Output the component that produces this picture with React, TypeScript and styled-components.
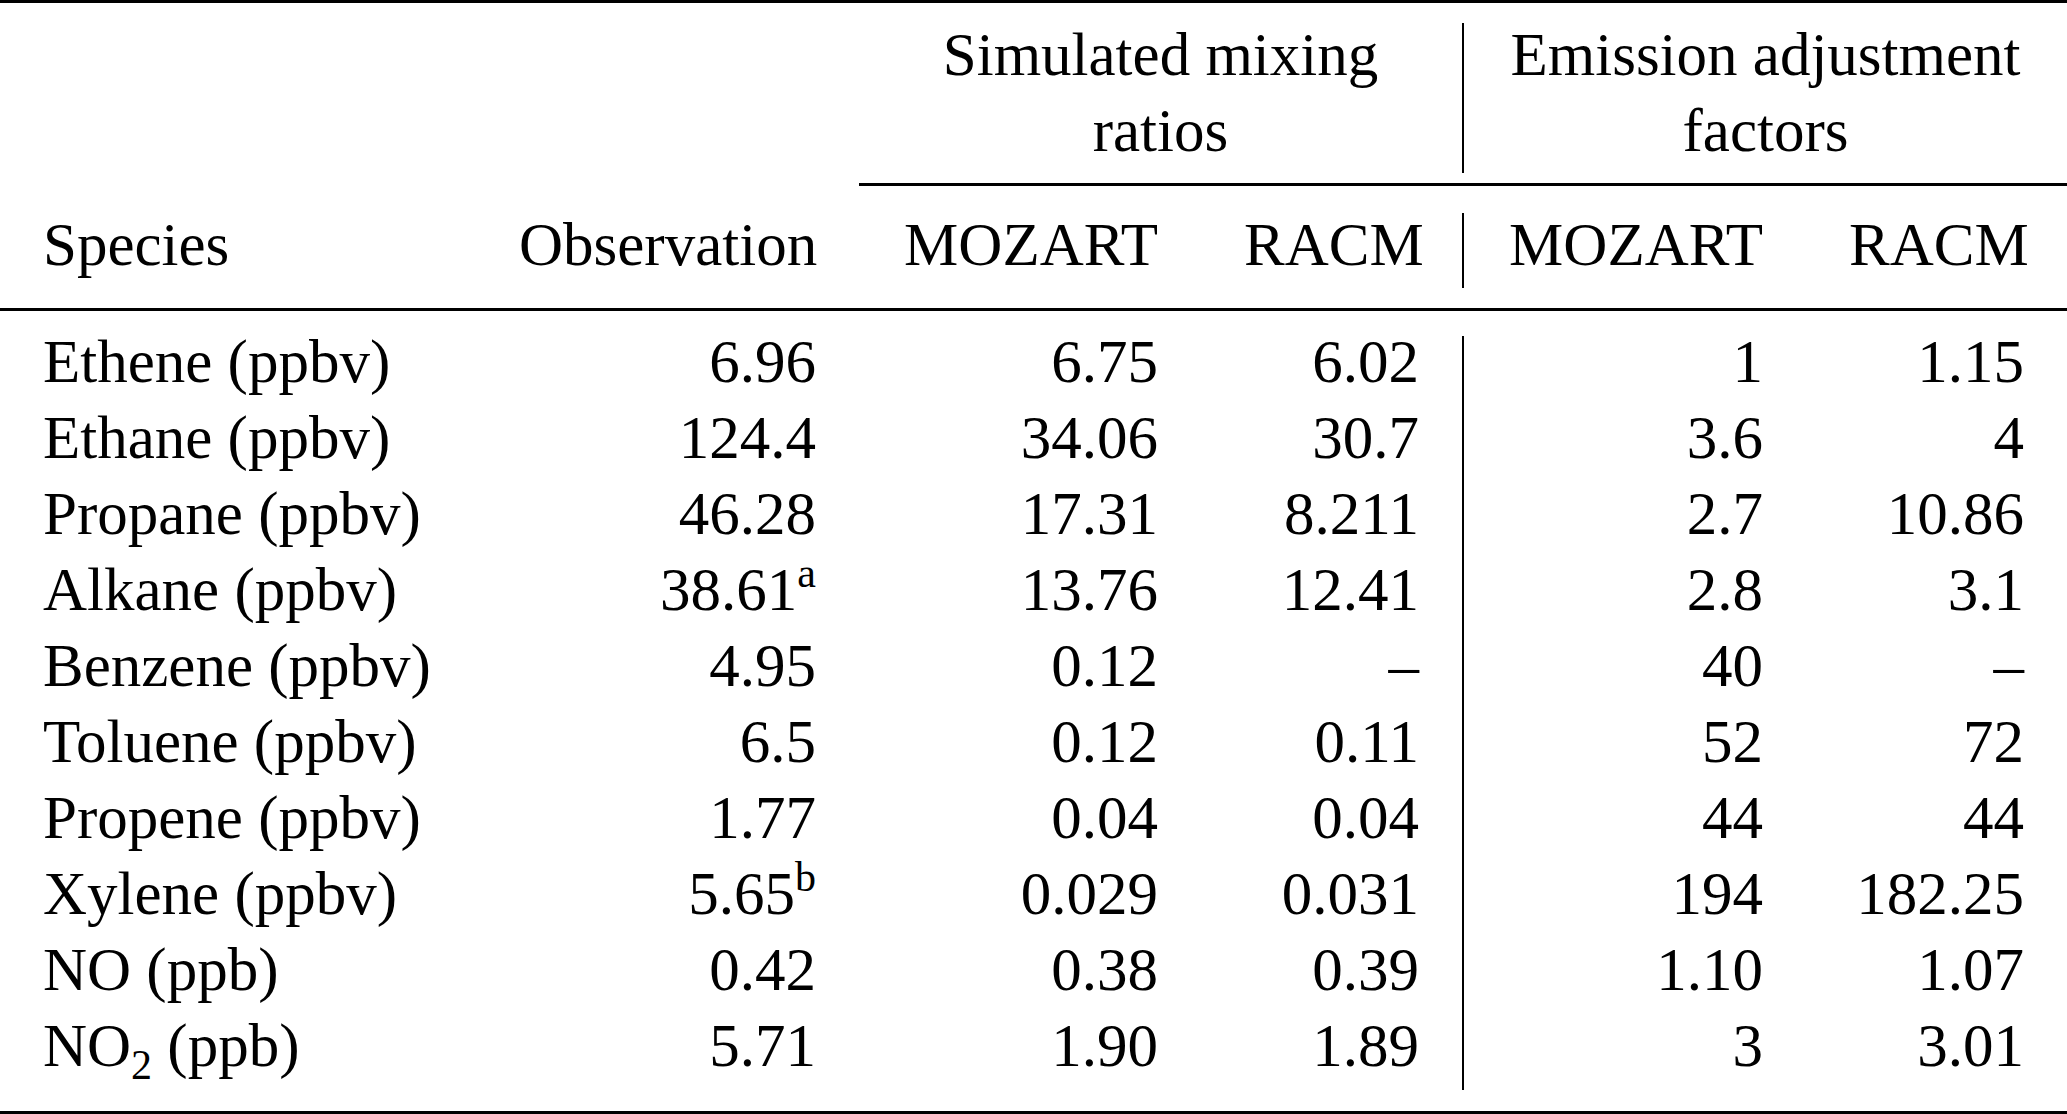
import React from 'react';
import styled, { createGlobalStyle } from 'styled-components';

const GlobalStyle = createGlobalStyle`
  html, body {
    margin: 0;
    padding: 0;
    background: #ffffff;
    overflow: hidden;
  }
  body {
    font-family: "Liberation Serif", "Times New Roman", serif;
    color: #000000;
  }
`;

// species | observation | mozart | racm | rule | mozart | racm
const COLUMNS = '476px 383px 342px 261px 2px 342px 1fr';

const Table = styled.div`
  display: flex;
  flex-direction: column;
  width: 100%;
  font-size: 61px;
  line-height: 76px;
`;

const Rule = styled.div<{ $weight: number; $indent?: number }>`
  height: ${({ $weight }) => $weight}px;
  margin-left: ${({ $indent }) => $indent || 0}px;
  background: #000000;
`;

const GroupHeader = styled.div`
  display: grid;
  grid-template-columns: ${COLUMNS};
  padding: 14px 0;
`;

const GroupTitle = styled.div<{ $col: number }>`
  grid-column: ${({ $col }) => $col} / span 2;
  grid-row: 1;
  padding: 0 43px;
  text-align: center;
  white-space: nowrap;
`;

const HeaderRow = styled.div`
  display: grid;
  grid-template-columns: ${COLUMNS};
  padding: 21px 0 25px;
`;

const Body = styled.div`
  display: grid;
  grid-template-columns: ${COLUMNS};
  grid-template-rows: repeat(10, 76px);
  padding: 13px 0 27px;
`;

const Cell = styled.div<{ $right?: boolean }>`
  padding: 0 43px;
  white-space: nowrap;
  text-align: ${({ $right }) => ($right ? 'right' : 'left')};
`;

const Divider = styled.div<{ $top: number; $bottom: number; $span?: boolean }>`
  grid-column: 5;
  grid-row: ${({ $span }) => ($span ? '1 / -1' : '1')};
  margin-top: ${({ $top }) => $top}px;
  margin-bottom: ${({ $bottom }) => $bottom}px;
  background: #000000;
`;

const Sup = styled.sup`
  font-size: 42px;
  line-height: 0;
  vertical-align: 23px;
`;

const Sub = styled.sub`
  font-size: 42px;
  line-height: 0;
  vertical-align: -13px;
`;

type Row = {
  species: React.ReactNode;
  values: React.ReactNode[];
};

const rows: Row[] = [
  { species: 'Ethene (ppbv)', values: ['6.96', '6.75', '6.02', '1', '1.15'] },
  { species: 'Ethane (ppbv)', values: ['124.4', '34.06', '30.7', '3.6', '4'] },
  { species: 'Propane (ppbv)', values: ['46.28', '17.31', '8.211', '2.7', '10.86'] },
  {
    species: 'Alkane (ppbv)',
    values: [
      <>
        38.61<Sup>a</Sup>
      </>,
      '13.76',
      '12.41',
      '2.8',
      '3.1',
    ],
  },
  { species: 'Benzene (ppbv)', values: ['4.95', '0.12', '–', '40', '–'] },
  { species: 'Toluene (ppbv)', values: ['6.5', '0.12', '0.11', '52', '72'] },
  { species: 'Propene (ppbv)', values: ['1.77', '0.04', '0.04', '44', '44'] },
  {
    species: 'Xylene (ppbv)',
    values: [
      <>
        5.65<Sup>b</Sup>
      </>,
      '0.029',
      '0.031',
      '194',
      '182.25',
    ],
  },
  { species: 'NO (ppb)', values: ['0.42', '0.38', '0.39', '1.10', '1.07'] },
  {
    species: (
      <>
        NO<Sub>2</Sub> (ppb)
      </>
    ),
    values: ['5.71', '1.90', '1.89', '3', '3.01'],
  },
];

const App = () => {
  return (
    <>
      <GlobalStyle />
      <Table>
        <Rule $weight={3} />
        <GroupHeader>
          <GroupTitle $col={3}>
            Simulated mixing
            <br />
            ratios
          </GroupTitle>
          <Divider $top={6} $bottom={-4} />
          <GroupTitle $col={6}>
            Emission adjustment
            <br />
            factors
          </GroupTitle>
        </GroupHeader>
        <Rule $weight={3} $indent={859} />
        <HeaderRow>
          <Cell>Species</Cell>
          <Cell $right>Observation</Cell>
          <Cell $right>MOZART</Cell>
          <Cell $right>RACM</Cell>
          <Divider $top={6} $bottom={-5} />
          <Cell $right>MOZART</Cell>
          <Cell $right>RACM</Cell>
        </HeaderRow>
        <Rule $weight={3} />
        <Body>
          <Divider $top={12} $bottom={-6} $span />
          {rows.map((row, i) => (
            <React.Fragment key={i}>
              <Cell>{row.species}</Cell>
              {row.values.map((v, j) => (
                <Cell key={j} $right>
                  {v}
                </Cell>
              ))}
            </React.Fragment>
          ))}
        </Body>
        <Rule $weight={3} />
      </Table>
    </>
  );
};

export default App;
